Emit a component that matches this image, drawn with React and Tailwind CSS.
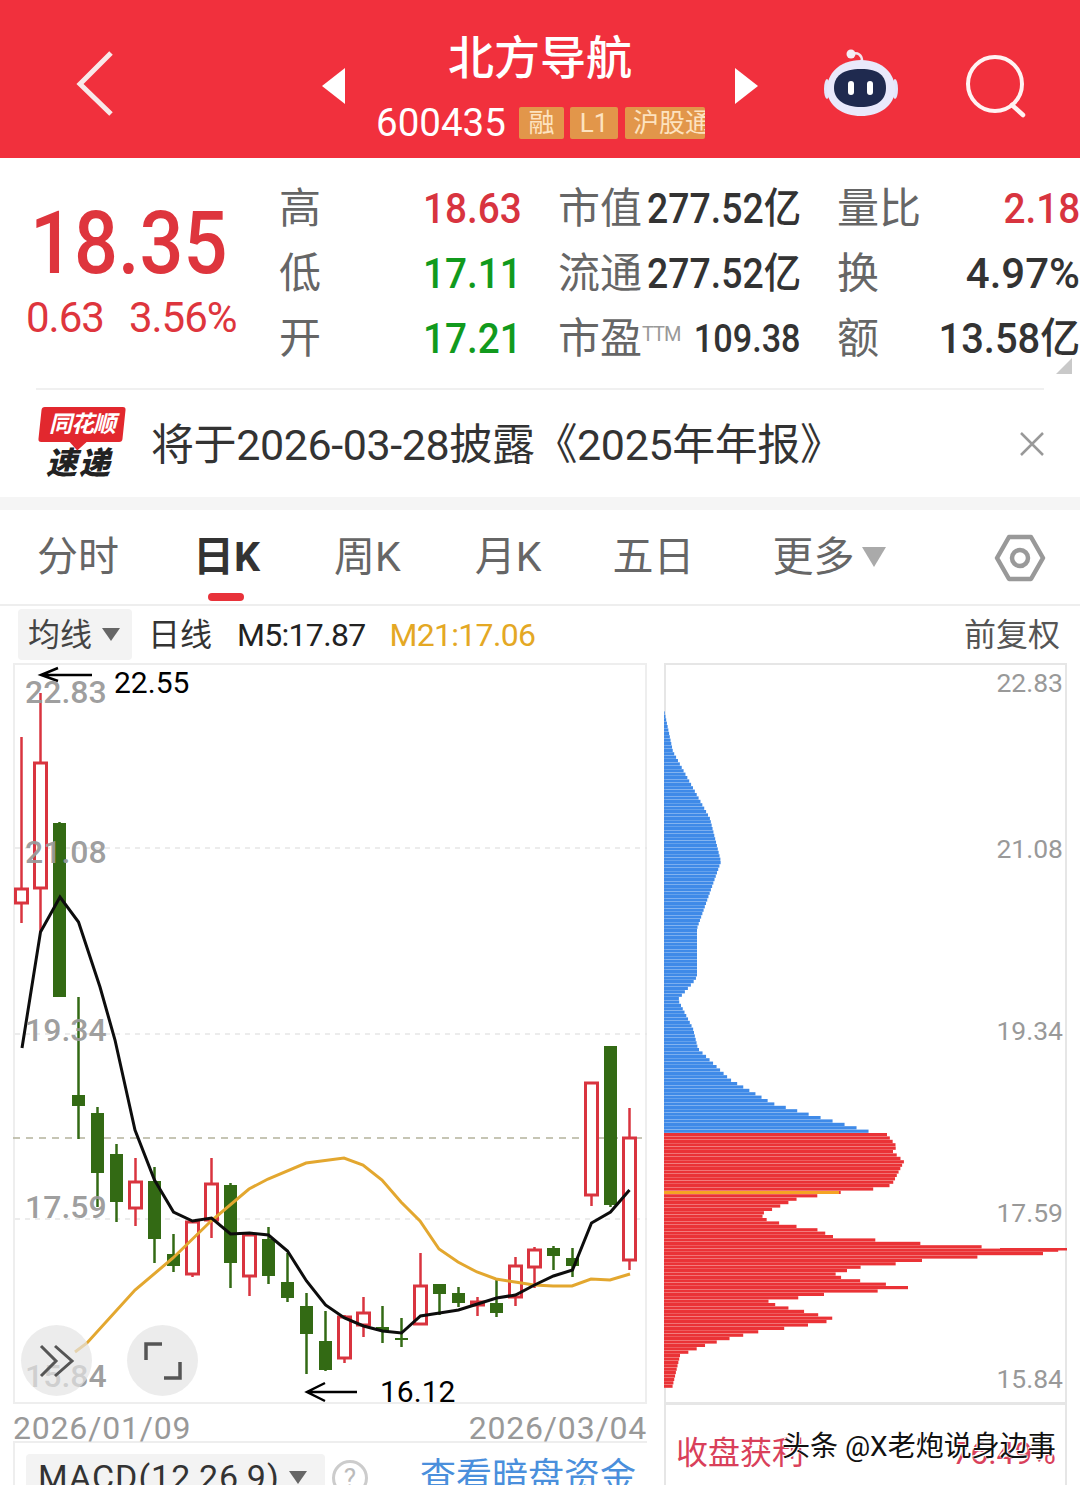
import React from 'react';

const RED = '#d9343f';
const GREEN = '#336a14';

// x, wickTop, wickBottom, bodyTop, bodyBottom, up
const candles = [
  [21.5, 737, 923, 889, 903, 1],
  [40.5, 693, 932, 763, 888, 1],
  [59.5, 822, 997, 823, 997, 0],
  [78.5, 997, 1139, 1095, 1106, 0],
  [97.5, 1107, 1207, 1113, 1173, 0],
  [116.5, 1144, 1222, 1154, 1202, 0],
  [135.5, 1158, 1226, 1182, 1208, 1],
  [154.5, 1167, 1263, 1181, 1239, 0],
  [173.5, 1234, 1272, 1254, 1266, 0],
  [192.5, 1222, 1277, 1222, 1274, 1],
  [211.5, 1158, 1238, 1184, 1220, 1],
  [230.5, 1183, 1288, 1185, 1263, 0],
  [249.5, 1232, 1296, 1235, 1276, 1],
  [268.5, 1227, 1284, 1239, 1276, 0],
  [287.5, 1253, 1302, 1282, 1298, 0],
  [306.5, 1293, 1374, 1306, 1334, 0],
  [325.5, 1311, 1371, 1341, 1370, 0],
  [344.5, 1315, 1363, 1317, 1358, 1],
  [363.5, 1297, 1337, 1313, 1325, 1],
  [382.5, 1306, 1343, 1327, 1331, 0],
  [401.5, 1318, 1347, 1338, 1340, 0],
  [420.5, 1253, 1325, 1286, 1324, 1],
  [439.5, 1284, 1315, 1284, 1294, 0],
  [458.5, 1287, 1307, 1293, 1303, 0],
  [477.5, 1297, 1316, 1302, 1305, 1],
  [496.5, 1278, 1317, 1303, 1313, 0],
  [515.5, 1257, 1306, 1266, 1297, 1],
  [534.5, 1247, 1288, 1250, 1267, 1],
  [553.5, 1246, 1270, 1248, 1256, 0],
  [572.5, 1248, 1277, 1258, 1266, 0],
  [591.5, 1083, 1206, 1083, 1195, 1],
  [610.5, 1046, 1207, 1046, 1205, 0],
  [629.5, 1108, 1270, 1138, 1260, 1],
];

const m5 = '22,1048 40.5,932 60,897 78.5,922 100,987 115,1040 135,1130 154.5,1180 173.5,1212 192.5,1221 211.5,1218 230.5,1234 249.5,1233 268.5,1235 287.5,1251 306.5,1281 325.5,1305 344.5,1318 363.5,1326 382.5,1331 401.5,1333 420.5,1316 439.5,1313 458.5,1310 477.5,1304 496.5,1298 515.5,1295 534.5,1285 553.5,1276 572.5,1270 591.5,1223 610.5,1212 629.5,1190';
const m21 = '75,1352 87,1343 135,1290 173,1258 211,1221 249,1189 268,1179 306,1163 344,1158 363,1165 382,1180 401,1202 420,1221 439,1249 458,1262 477,1272 496,1279 515,1282 534,1285 553,1286 572,1286 591,1279 610,1280 630,1274';

// right edge of the chip distribution: [y, x]
const profile = [
  [708, 664], [750, 673], [808, 705], [817, 710], [860, 721], [927, 697], [975, 697], [981, 693],
  [998, 678], [1027, 693], [1047, 698], [1078, 730], [1102, 773], [1113, 810], [1132, 877],
  [1133, 887], [1145, 897], [1150, 893], [1160, 904], [1183, 892], [1187, 882], [1188, 860],
  [1197, 798], [1212, 762], [1217, 763], [1223, 785], [1228, 817], [1235, 833], [1238, 870],
  [1242, 923], [1245, 977], [1247, 1023], [1249, 1067], [1252, 1043], [1255, 985], [1258, 928],
  [1262, 898], [1265, 863], [1272, 835], [1277, 843], [1282, 882], [1286, 908], [1289, 885],
  [1292, 830], [1296, 800], [1300, 765], [1305, 782], [1310, 805], [1318, 838], [1322, 815],
  [1326, 795], [1328, 768], [1335, 737], [1343, 707], [1354, 680], [1387, 672],
];

const edgeAt = (y) => {
  for (let i = 1; i < profile.length; i++) {
    const [y0, x0] = profile[i - 1];
    const [y1, x1] = profile[i];
    if (y <= y1) return x0 + ((x1 - x0) * (y - y0)) / (y1 - y0);
  }
  return 664;
};

const bars = [];
for (let y = 708; y < 1387; y += 3.4) bars.push(y);

function Stat({ label, value, valueClass }) {
  return (
    <div className="flex items-center justify-between h-[65px] whitespace-nowrap">
      {label}
      <span className={valueClass}>{value}</span>
    </div>
  );
}

const labelCls = 'text-[42px] text-[#666666] leading-none shrink-0 -ml-[2px]';
const numCls = 'text-[43px] font-medium leading-none origin-right scale-x-[0.9]';
const darkCls = 'text-[42px] font-medium text-[#333333] leading-none origin-right scale-x-[0.89] -ml-[20px]';

function Robot() {
  return (
    <svg width="80" height="72" viewBox="0 0 80 72">
      <path d="M31 6 C37 4 41 7 41 13" fill="none" stroke="#f3e4ee" strokeWidth="2.5" />
      <circle cx="30" cy="6" r="4.5" fill="#f4eef6" />
      <ellipse cx="6" cy="41" rx="3" ry="10" fill="#e3e6fb" />
      <ellipse cx="74" cy="41" rx="3" ry="10" fill="#e3e6fb" />
      <path d="M40 12 C62 12 74 26 74 41 C74 58 58 68 40 68 C22 68 6 58 6 41 C6 26 18 12 40 12Z" fill="#e9e9fb" />
      <path d="M40 21 C58 21 65 28 65 40 C65 52 56 59 40 59 C24 59 13 52 13 40 C13 28 22 21 40 21Z" fill="#1f2a4f" />
      <rect x="27" y="33" width="6" height="14" rx="3" fill="#ffffff" />
      <rect x="46" y="33" width="6" height="14" rx="3" fill="#ffffff" />
    </svg>
  );
}

function CandleChart() {
  return (
    <svg className="block" width="634" height="741" viewBox="13 663 634 741">
      <line x1="15" x2="647" y1="848" y2="848" stroke="#e6e6e6" strokeWidth="1.5" strokeDasharray="5 5" />
      <line x1="15" x2="647" y1="1034" y2="1034" stroke="#e6e6e6" strokeWidth="1.5" strokeDasharray="5 5" />
      <line x1="15" x2="647" y1="1219" y2="1219" stroke="#e6e6e6" strokeWidth="1.5" strokeDasharray="5 5" />
      <line x1="13" x2="642" y1="1138" y2="1138" stroke="#b4b29c" strokeWidth="1.5" strokeDasharray="7 6" />
      {candles.map(([x, wt, wb, bt, bb, up]) => {
        const color = up ? RED : GREEN;
        return (
          <g key={x}>
            {up ? (
              <>
                <line x1={x} x2={x} y1={wt} y2={bt} stroke={color} strokeWidth="2.5" />
                <line x1={x} x2={x} y1={bb} y2={wb} stroke={color} strokeWidth="2.5" />
                <rect x={x - 6} y={bt} width="12" height={bb - bt} fill="#ffffff" stroke={color} strokeWidth="3" />
              </>
            ) : (
              <>
                <line x1={x} x2={x} y1={wt} y2={wb} stroke={color} strokeWidth="2.5" />
                <rect x={x - 6.5} y={bt} width="13" height={bb - bt} fill={color} />
              </>
            )}
          </g>
        );
      })}
      <polyline points={m21} fill="none" stroke="#e3a72f" strokeWidth="3" />
      <polyline points={m5} fill="none" stroke="#0d0d0d" strokeWidth="3" />
      <path d="M92 675 H41 M58 668 L41 675 L58 681" fill="none" stroke="#000000" strokeWidth="2.5" />
      <path d="M357 1392 H307 M325 1383 L307 1392 L325 1401" fill="none" stroke="#000000" strokeWidth="2.5" />
    </svg>
  );
}

function ChipChart() {
  return (
    <svg className="block" width="403" height="741" viewBox="664 663 403 741">
      {bars.map((y) => (
        <rect
          key={y}
          x="664"
          y={y}
          width={Math.max(edgeAt(y) - 664, 0)}
          height="3.2"
          fill={y < 1133 ? '#3f8ae8' : '#ea3236'}
        />
      ))}
      <rect x="664" y="1191" width="175" height="3" fill="#f5a324" />
      <rect x="1000" y="1248" width="67" height="2.5" fill="#ea3236" />
    </svg>
  );
}

export default function App() {
  return (
    <div className="relative w-[1080px] h-[1485px] overflow-hidden bg-white font-['Roboto','Noto_Sans_CJK_SC',sans-serif]">
      {/* header */}
      <div className="relative h-[158px] bg-[#f1303d] text-white">
        <svg className="absolute left-[72px] top-[47px]" width="46" height="74" viewBox="0 0 46 74">
          <path d="M39 6 L8 37 L39 67" fill="none" stroke="#f8e9e9" strokeWidth="5" />
        </svg>
        <div className="absolute left-[322px] top-[68px] w-0 h-0 border-y-[18px] border-y-transparent border-r-[23px] border-r-white" />
        <div className="absolute left-[735px] top-[68px] w-0 h-0 border-y-[18px] border-y-transparent border-l-[23px] border-l-white" />
        <div className="absolute left-0 right-0 top-[32px] text-center text-[46px] font-medium leading-[52px]">北方导航</div>
        <div className="absolute left-[376px] top-[104px] flex items-center">
          <span className="text-[38.5px] leading-[38px] w-[143px]">600435</span>
          <span className="flex items-center justify-center w-[45px] h-[32px] bg-[#e2964a] rounded-[2px] text-[26px] text-[#fde3c0] leading-none">融</span>
          <span className="flex items-center justify-center w-[48px] h-[32px] ml-[6px] bg-[#e2964a] rounded-[2px] text-[26px] text-[#fde3c0] leading-none">L1</span>
          <span className="block w-[80px] h-[32px] ml-[7px] pl-[8px] bg-[#e2964a] rounded-[2px] text-[26px] text-[#fde3c0] leading-[32px] whitespace-nowrap overflow-hidden">沪股通</span>
        </div>
        <div className="absolute left-[821px] top-[48px]"><Robot /></div>
        <svg className="absolute left-[959px] top-[49px]" width="72" height="72" viewBox="0 0 72 72">
          <circle cx="36" cy="35" r="27" fill="none" stroke="#fff3f3" strokeWidth="4" />
          <path d="M53 56 L64 66" stroke="#fff3f3" strokeWidth="4.5" strokeLinecap="round" />
        </svg>
      </div>

      {/* quote */}
      <div className="relative flex h-[232px] mx-[36px] border-b-2 border-[#f0f0f0]">
        <div className="w-[245px] -ml-[36px] pl-[26px] pt-[41px] shrink-0">
          <div className="text-[87px] font-medium leading-[88px] text-[#de353d] ml-[4px] origin-left scale-x-[0.89]">18.35</div>
          <div className="flex gap-[25px] mt-[9px] text-[42px] leading-[44px] text-[#de353d] tracking-[-1px]">
            <span>0.63</span>
            <span>3.56%</span>
          </div>
        </div>
        <div className="absolute left-[245px] top-[18px] grid grid-cols-[241px_241px_241px] gap-x-[38px]">
          <Stat label={<span className={labelCls}>高</span>} value="18.63" valueClass={`${numCls} text-[#d8343f]`} />
          <Stat label={<span className={labelCls}>市值</span>} value="277.52亿" valueClass={darkCls} />
          <Stat label={<span className={labelCls}>量比</span>} value="2.18" valueClass={`${numCls} text-[#d8343f]`} />
          <Stat label={<span className={labelCls}>低</span>} value="17.11" valueClass={`${numCls} text-[#119a1d]`} />
          <Stat label={<span className={labelCls}>流通</span>} value="277.52亿" valueClass={darkCls} />
          <Stat
            label={<span className={labelCls}>换</span>}
            value="4.97%"
            valueClass="text-[42px] font-medium text-[#333333] leading-none"
          />
          <Stat label={<span className={labelCls}>开</span>} value="17.21" valueClass={`${numCls} text-[#119a1d]`} />
          <Stat
            label={<span className={labelCls}>市盈<sup className="text-[20px] text-[#999999] font-normal -top-[12px] tracking-[-1px]">TTM</sup></span>}
            value="109.38"
            valueClass="text-[38px] font-medium text-[#333333] leading-none origin-right scale-x-[0.9]"
          />
          <Stat
            label={<span className={labelCls}>额</span>}
            value="13.58亿"
            valueClass="text-[42px] font-medium text-[#333333] leading-none origin-right scale-x-[0.95]"
          />
        </div>
        <div className="absolute right-[-28px] top-[200px] w-0 h-0 border-b-[16px] border-b-[#c9c9c9] border-l-[16px] border-l-transparent" />
      </div>

      {/* notice */}
      <div className="flex items-center h-[107px] pl-[37px] pr-[35px]">
        <div className="w-[114px] shrink-0">
          <div className="relative w-[84px] ml-[3px] h-[35px] bg-[#e2282e] rounded-[3px] -skew-x-6 flex items-center justify-center">
            <span className="text-[23px] font-bold italic text-white leading-none tracking-[-1px] skew-x-6 whitespace-nowrap">同花顺</span>
            <span className="absolute left-[34px] -bottom-[6px] w-[12px] h-[12px] bg-[#e2282e] rotate-45" />
          </div>
          <div className="mt-[4px] pl-[9px] text-[31px] font-black italic text-[#222222] leading-[35px] tracking-[2px]">速递</div>
        </div>
        <div className="flex-1 mt-[3px] text-[43px] leading-none text-[#333333] whitespace-nowrap tracking-[-0.4px]">将于2026-03-28披露《2025年年报》</div>
        <svg width="26" height="26" viewBox="0 0 26 26">
          <path d="M2 2 L24 24 M24 2 L2 24" stroke="#999999" strokeWidth="2.5" />
        </svg>
      </div>
      <div className="h-[13px] bg-[#f5f5f5]" />

      {/* period tabs */}
      <div className="relative flex items-center h-[96px] border-b-2 border-[#eeeeee] pl-[37px] text-[41px] text-[#666666] leading-none">
        <span>分时</span>
        <span className="relative ml-[74px] font-bold text-[#333333]">
          日K
          <span className="absolute left-[15px] top-[56px] w-[36px] h-[8px] rounded-full bg-[#e8323a]" />
        </span>
        <span className="ml-[74px]">周K</span>
        <span className="ml-[74px]">月K</span>
        <span className="ml-[71px]">五日</span>
        <span className="ml-[78px]">更多</span>
        <span className="ml-[7px] w-0 h-0 border-x-[12px] border-x-transparent border-t-[20px] border-t-[#aaaaaa]" />
        <svg className="absolute left-[994px] top-[24px]" width="52" height="48" viewBox="0 0 52 48">
          <path d="M15 3 H37 L49 24 L37 45 H15 L3 24 Z" fill="none" stroke="#999999" strokeWidth="4.5" strokeLinejoin="round" />
          <circle cx="26" cy="24" r="8" fill="none" stroke="#999999" strokeWidth="4.5" />
        </svg>
      </div>

      {/* chart toolbar */}
      <div className="flex items-center h-[57px] pl-[18px] pr-[20px]">
        <div className="flex items-center w-[114px] h-[51px] pl-[10px] bg-[#f3f3f3] rounded-[4px] text-[32px] text-[#444444] leading-none">
          均线
          <span className="ml-[10px] w-0 h-0 border-x-[9px] border-x-transparent border-t-[13px] border-t-[#666666]" />
        </div>
        <span className="ml-[16px] text-[32px] text-[#333333] leading-none">日线</span>
        <span className="ml-[25px] text-[32px] text-[#222222] leading-none tracking-[-0.7px]">M5:17.87</span>
        <span className="ml-[24px] text-[32px] text-[#e4a824] leading-none tracking-[-0.7px]">M21:17.06</span>
        <span className="ml-auto text-[32px] text-[#555555] leading-none">前复权</span>
      </div>

      {/* charts */}
      <div className="flex pl-[13px] gap-[17px]">
        <div className="relative w-[634px] h-[741px] shadow-[inset_0_0_0_2px_#eeeeee]">
          <CandleChart />
          <div className="absolute inset-0 text-[32px] leading-none text-[#999999]/95 font-medium">
            <span className="absolute left-[12px] top-[13px]">22.83</span>
            <span className="absolute left-[12px] top-[173px]">21.08</span>
            <span className="absolute left-[12px] top-[351px]">19.34</span>
            <span className="absolute left-[12px] top-[528px]">17.59</span>
            <span className="absolute left-[12px] top-[697px]">15.84</span>
          </div>
          <span className="absolute left-[101px] top-[5px] text-[30px] leading-none text-black">22.55</span>
          <span className="absolute left-[367px] top-[714px] text-[30px] leading-none text-black">16.12</span>
          <button className="absolute left-[8px] top-[662px] w-[71px] h-[71px] rounded-full bg-[#e4e4e4]/70 flex items-center justify-center">
            <svg width="36" height="36" viewBox="0 0 36 36">
              <path d="M2 3 L17 18 L2 33 M16 3 L33 18 L16 33" fill="none" stroke="#555555" strokeWidth="3" />
            </svg>
          </button>
          <button className="absolute left-[114px] top-[662px] w-[71px] h-[71px] rounded-full bg-[#e4e4e4]/70 flex items-center justify-center">
            <svg width="38" height="38" viewBox="0 0 38 38">
              <path d="M2 18 V2 H18 M36 20 V36 H20" fill="none" stroke="#555555" strokeWidth="3.5" />
            </svg>
          </button>
        </div>
        <div className="relative w-[403px] h-[741px] shadow-[inset_0_0_0_2px_#e6e6e6]">
          <ChipChart />
          <div className="absolute inset-0 text-[26.5px] leading-none text-[#999999]">
            <span className="absolute right-[4px] top-[7px]">22.83</span>
            <span className="absolute right-[4px] top-[173px]">21.08</span>
            <span className="absolute right-[4px] top-[355px]">19.34</span>
            <span className="absolute right-[4px] top-[537px]">17.59</span>
            <span className="absolute right-[4px] top-[703px]">15.84</span>
          </div>
        </div>
      </div>

      {/* bottom */}
      <div className="flex pl-[13px] gap-[17px]">
        <div className="w-[634px]">
          <div className="flex justify-between h-[39px] pt-[8px] text-[32px] leading-none text-[#999999] tracking-[0.8px] border-b-2 border-[#eeeeee]">
            <span>2026/01/09</span>
            <span>2026/03/04</span>
          </div>
          <div className="flex items-start h-[46px] pl-[11px] pt-[11px] border-l-2 border-[#eeeeee] overflow-hidden">
            <div className="flex items-start shrink-0 w-[299px] h-[60px] pl-[12px] pt-[6px] bg-[#f3f3f3] rounded-t-[4px] text-[34px] text-[#333333] leading-none tracking-[1px] whitespace-nowrap">
              MACD(12,26,9)
              <span className="ml-[9px] mt-[11px] w-0 h-0 border-x-[9px] border-x-transparent border-t-[13px] border-t-[#666666]" />
            </div>
            <span className="shrink-0 ml-[7px] mt-[6px] w-[36px] h-[36px] rounded-full border-[3px] border-[#cccccc] text-[26px] text-[#bbbbbb] flex items-center justify-center leading-none">?</span>
            <span className="ml-[52px] mt-[5px] text-[36px] text-[#4a8fdc] leading-none whitespace-nowrap">查看暗盘资金</span>
          </div>
        </div>
        <div className="w-[403px] h-[82px] border-x-2 border-t-2 border-[#e6e6e6] -mt-[1px] pl-[10px] pt-[32px] flex justify-between pr-[9px] text-[32px] leading-none text-[#d9405a]">
          <span>收盘获利</span>
          <span>76.49%</span>
        </div>
      </div>

      {/* watermark */}
      <div className="absolute left-[782px] top-[1432px] text-[28px] leading-[30px] text-[#111111] whitespace-nowrap [text-shadow:0_0_2px_#ffffff,1px_1px_0_#ffffff,-1px_-1px_0_#ffffff]">头条 @X老炮说身边事</div>
    </div>
  );
}
